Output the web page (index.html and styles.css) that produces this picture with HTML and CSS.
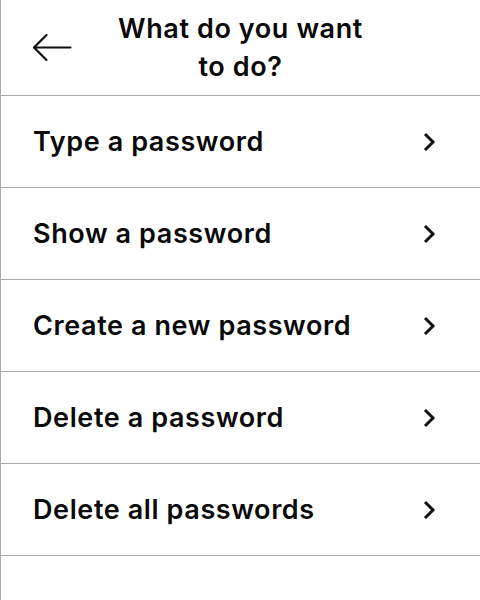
FILE: index.html
```html
<!DOCTYPE html>
<html>
<head>
<meta charset="utf-8">
<link rel="stylesheet" href="styles.css">
</head>
<body>
<div class="screen">
  <header class="header">
    <div class="back">
      <svg width="40" height="30" viewBox="0 0 40 30" fill="none" stroke="#111" stroke-width="2.2" stroke-linecap="round" stroke-linejoin="round">
        <path d="M38.5 14.5H2.5M14.5 2L2 14.5L14.5 27"/>
      </svg>
    </div>
    <h1 class="title">What do you want to do?</h1>
    <div class="spacer"></div>
  </header>
  <ul class="menu">
    <li class="item"><span>Type a password</span><svg class="chev" width="14" height="20" viewBox="0 0 14 20"><path d="M2 2L10 10L2 18" fill="none" stroke="#111" stroke-width="3"/></svg></li>
    <li class="item"><span>Show a password</span><svg class="chev" width="14" height="20" viewBox="0 0 14 20"><path d="M2 2L10 10L2 18" fill="none" stroke="#111" stroke-width="3"/></svg></li>
    <li class="item"><span>Create a new password</span><svg class="chev" width="14" height="20" viewBox="0 0 14 20"><path d="M2 2L10 10L2 18" fill="none" stroke="#111" stroke-width="3"/></svg></li>
    <li class="item"><span>Delete a password</span><svg class="chev" width="14" height="20" viewBox="0 0 14 20"><path d="M2 2L10 10L2 18" fill="none" stroke="#111" stroke-width="3"/></svg></li>
    <li class="item"><span>Delete all passwords</span><svg class="chev" width="14" height="20" viewBox="0 0 14 20"><path d="M2 2L10 10L2 18" fill="none" stroke="#111" stroke-width="3"/></svg></li>
  </ul>
</div>
</body>
</html>
```
FILE: styles.css
```css
html, body {
  margin: 0;
  padding: 0;
  background: #fff;
}
body {
  font-family: Inter, "Noto Sans", sans-serif;
  color: #0a0a0a;
}
.screen {
  width: 480px;
  height: 600px;
  border-left: 1px solid #aaa;
  box-sizing: border-box;
}
.header {
  display: grid;
  grid-template-columns: 1fr 260px 1fr;
  align-items: center;
  height: 95px;
  border-bottom: 1px solid #aaa;
}
.back {
  padding-left: 31px;
  display: flex;
  align-items: center;
}
.back svg {
  display: block;
}
.title {
  margin: 0;
  text-align: center;
  font-size: 27px;
  font-weight: 600;
  line-height: 38px;
  letter-spacing: 0.6px;
}
.menu {
  list-style: none;
  margin: 0;
  padding: 0;
}
.item {
  display: flex;
  align-items: center;
  justify-content: space-between;
  height: 91px;
  border-bottom: 1px solid #aaa;
  padding: 0 43px 0 32px;
  font-size: 27px;
  font-weight: 600;
  letter-spacing: 0.6px;
}
.chev {
  display: block;
}
```
